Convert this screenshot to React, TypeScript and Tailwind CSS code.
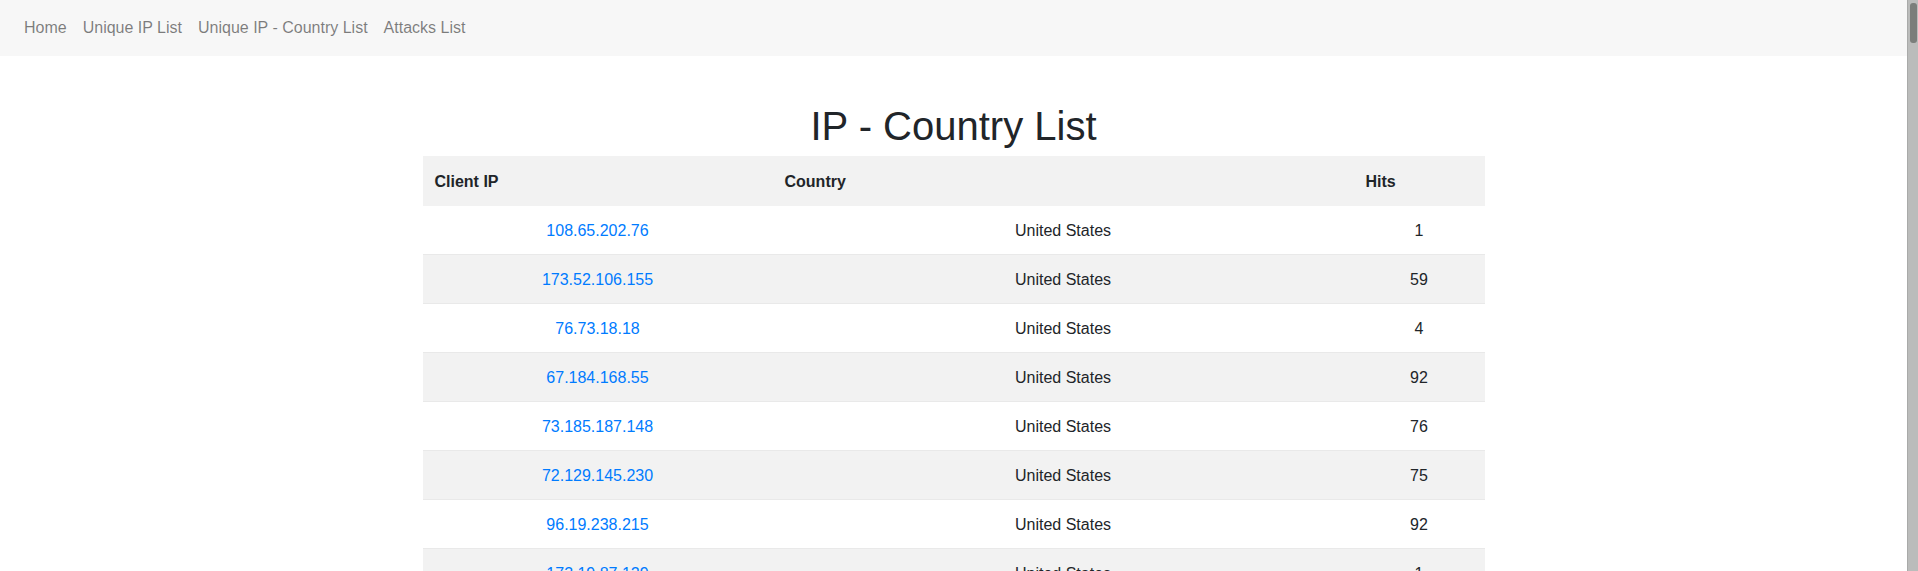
import React from "react";

const rows: [string, string, number][] = [
  ["108.65.202.76", "United States", 1],
  ["173.52.106.155", "United States", 59],
  ["76.73.18.18", "United States", 4],
  ["67.184.168.55", "United States", 92],
  ["73.185.187.148", "United States", 76],
  ["72.129.145.230", "United States", 75],
  ["96.19.238.215", "United States", 92],
  ["173.19.87.129", "United States", 1],
  ["24.14.82.201", "United States", 12],
  ["98.213.44.17", "United States", 33],
];

export default function App() {
  return (
    <div
      className="flex h-[571px] overflow-hidden bg-white text-[#212529] text-base leading-6"
      style={{ fontFamily: '"Liberation Sans", Arial, sans-serif' }}
    >
      <div className="flex-1 min-w-0">
        <nav className="bg-[#f7f7f7] h-[56px] px-4 py-2 flex items-center">
          <ul className="flex">
            {["Home", "Unique IP List", "Unique IP - Country List", "Attacks List"].map((t) => (
              <li key={t}>
                <a href="#" className="block px-2 py-2 text-[rgba(0,0,0,0.5)]">
                  {t}
                </a>
              </li>
            ))}
          </ul>
        </nav>
        <main className="pt-[46px]">
          <h1 className="text-center text-[40px] leading-[48px] mb-[6px] font-normal">
            IP - Country List
          </h1>
          <table className="w-[1062px] mx-auto table-fixed border-collapse">
            <colgroup>
              <col className="w-[350px]" />
              <col className="w-[581px]" />
              <col className="w-[131px]" />
            </colgroup>
            <thead>
              <tr className="bg-[#f2f2f2]">
                <th className="text-left font-bold px-3 pt-[14px] pb-[12px]">Client IP</th>
                <th className="text-left font-bold px-3 pt-[14px] pb-[12px]">Country</th>
                <th className="text-left font-bold px-3 pt-[14px] pb-[12px]">Hits</th>
              </tr>
            </thead>
            <tbody>
              {rows.map(([ip, c, h], i) => (
                <tr
                  key={ip}
                  className={
                    "border-b border-[#e9e9e9] " + (i % 2 === 1 ? "bg-[#f2f2f2]" : "bg-white")
                  }
                >
                  <td className="text-center px-3 pt-[13px] pb-[11px]">
                    <a href="#" className="text-[#007bff]">
                      {ip}
                    </a>
                  </td>
                  <td className="text-center px-3 pt-[13px] pb-[11px]">{c}</td>
                  <td className="text-center px-3 pt-[13px] pb-[11px]">{h}</td>
                </tr>
              ))}
            </tbody>
          </table>
        </main>
      </div>
      <div className="w-[11px] shrink-0 bg-[#bbbcbb] border-l border-[#a9aaa9] pt-[3px] pl-[2px] pr-[1px]">
        <div className="h-[40px] rounded-[3px] bg-[#7b7e7b]" />
      </div>
    </div>
  );
}
